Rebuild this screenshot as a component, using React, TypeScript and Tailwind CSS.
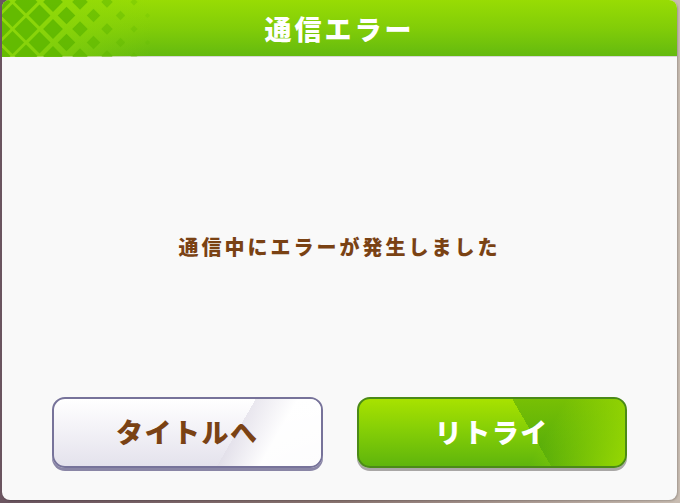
import React from "react";

// ── Header lattice pattern ─────────────────────────────────────────────────────

function Lattice() {
  const s = 27;
  const diamonds: { cx: number; cy: number; r: number; o: number }[] = [];
  for (let j = 0; j < 6; j++) {
    for (let i = 0; i < 7; i++) {
      const cx = i * s + (j % 2 ? s / 2 : 0) - 3;
      const cy = j * (s / 2) + 2;
      const r = cx < 30 ? 11.5 : 11.5 - ((cx - 30) / 110) * 8.5;
      const o = cx < 60 ? 0.85 : 0.85 - ((cx - 60) / 90) * 0.7;
      if (r > 2.5 && o > 0.1) diamonds.push({ cx, cy, r, o });
    }
  }
  return (
    <svg width="170" height="57" className="absolute left-0 top-0" aria-hidden>
      <defs>
        <linearGradient id="lat" x1="0" x2="1" y1="0" y2="0">
          <stop offset="0" stopColor="#8ed80a" stopOpacity="0.9" />
          <stop offset="1" stopColor="#8ed80a" stopOpacity="0" />
        </linearGradient>
      </defs>
      <rect x="0" y="0" width="150" height="57" fill="url(#lat)" />
      {diamonds.map((d, k) => (
        <polygon
          key={k}
          points={`${d.cx},${d.cy - d.r} ${d.cx + d.r},${d.cy} ${d.cx},${d.cy + d.r} ${d.cx - d.r},${d.cy}`}
          fill="#5db600"
          opacity={d.o}
        />
      ))}
    </svg>
  );
}

// ── Buttons ───────────────────────────────────────────────────────────────────

function TitleButton() {
  return (
    <button className="relative flex-1 h-[71px] rounded-[13px] border-2 border-[#77739a] bg-[linear-gradient(180deg,#ffffff_0%,#f3f2f7_45%,#e4e2ec_100%)] shadow-[0_3px_0_#8a86a6] overflow-hidden">
      <div className="absolute inset-0 bg-[linear-gradient(120deg,transparent_66%,rgba(225,222,232,0.7)_66%,rgba(255,255,255,0.95)_80%,rgba(255,255,255,0.9)_100%)]" />
      <span className="relative text-[27px] font-black tracking-[1.5px] text-[#7a4214] leading-none">
        タイトルへ
      </span>
    </button>
  );
}

function RetryButton() {
  return (
    <button className="relative flex-1 h-[71px] rounded-[13px] border-2 border-[#4b8a17] bg-[linear-gradient(180deg,#a8e200_0%,#86cf06_45%,#5fb50c_100%)] shadow-[0_3px_0_#a9a7a6] overflow-hidden">
      <div className="absolute inset-0 bg-[linear-gradient(60deg,transparent_63%,rgba(60,150,10,0.45)_63%,rgba(60,150,10,0.45)_100%)]" />
      <div className="absolute inset-0 bg-[linear-gradient(120deg,transparent_68%,rgba(175,232,0,0.75)_100%)]" />
      <span className="relative text-[27px] font-black tracking-[1.5px] text-white leading-none">
        リトライ
      </span>
    </button>
  );
}

// ── Main ──────────────────────────────────────────────────────────────────────

export default function App() {
  return (
    <div
      className="w-[680px] h-[503px] overflow-hidden bg-[linear-gradient(90deg,#6b5560_0%,#8a7470_50%,#c9bdb2_100%)]"
      style={{ fontFamily: '"Noto Sans CJK JP", "Noto Sans", sans-serif' }}
    >
      <div className="ml-[2px] w-[675px] h-[500px] rounded-[8px] bg-[#f9f9f9] overflow-hidden shadow-[1px_1px_2px_rgba(0,0,0,0.2)] flex flex-col">
        {/* Header */}
        <div className="relative h-[57px] bg-[linear-gradient(180deg,#98dc04_0%,#82cd08_50%,#64ba0f_100%)] border-b border-[#d6d6d6] flex items-center justify-center">
          <Lattice />
          <h1 className="relative text-[27px] font-black tracking-[3px] text-white leading-none">
            通信エラー
          </h1>
        </div>

        {/* Body */}
        <div className="flex-1 flex flex-col">
          <p className="mt-[176px] h-[28px] flex items-center justify-center text-[20px] font-black tracking-[3px] text-[#7a4214]">
            通信中にエラーが発生しました
          </p>

          <div className="mt-[136px] px-[50px] flex gap-[34px]">
            <TitleButton />
            <RetryButton />
          </div>
        </div>
      </div>
    </div>
  );
}
